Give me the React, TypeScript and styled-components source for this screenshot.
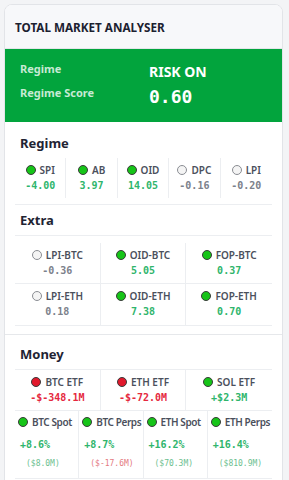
import React from 'react';
import styled, { createGlobalStyle } from 'styled-components';

const GlobalStyle = createGlobalStyle`
  body {
    margin: 0;
    padding: 4px 6px 0 4px;
    background: #f3f4f6;
    font-family: "Noto Sans", "Open Sans", sans-serif;
  }
`

const Card = styled.div`
  background: #fff;
  border: 1px solid #e2e4e8;
  border-radius: 8px;
  overflow: hidden;
`

const Header = styled.div`
  height: 43px;
  display: flex;
  align-items: center;
  padding-left: 10px;
  background: #f7f8fa;
  border-bottom: 1px solid #e4e6ea;
  color: #1c2130;
  font-size: 11.7px;
  font-weight: 700;
`

const Banner = styled.div`
  height: 73px;
  background: #02a43d;
  display: grid;
  grid-template-columns: 129px 1fr;
  grid-auto-rows: 24px;
  align-content: start;
  padding: 10px 0 0 15px;
  box-sizing: border-box;
`

const BannerLabel = styled.div`
  color: rgba(255, 255, 255, 0.78);
  font-size: 11px;
  font-weight: 700;
  line-height: 20px;
`

const BannerValue = styled.div<{ $mono?: boolean }>`
  color: #fff;
  font-weight: 700;
  font-size: ${p => (p.$mono ? '18px' : '14px')};
  font-family: ${p => (p.$mono ? '"DejaVu Sans Mono", monospace' : 'inherit')};
  line-height: ${p => (p.$mono ? '26px' : '22px')};
  margin-top: ${p => (p.$mono ? '1px' : '2px')};
`

const Section = styled.div<{ $top?: boolean }>`
  padding: ${p => (p.$top ? '10px' : '12px')} 10px 8px;
  border-top: ${p => (p.$top ? '1px solid #e6e8eb' : 'none')};
`

const Heading = styled.div<{ $gap?: number }>`
  color: #1f2433;
  font-size: 13px;
  font-weight: 700;
  line-height: 18px;
  padding-left: 5px;
  margin-top: ${p => p.$gap ?? 0}px;
  margin-bottom: 6px;
`

const Grid = styled.div<{ $cols: number; $lined?: boolean; $padTop?: number; $padBottom?: number }>`
  display: grid;
  grid-template-columns: repeat(${p => p.$cols}, 1fr);
  border-top: ${p => (p.$lined ? '1px solid #eceef1' : 'none')};
  border-bottom: 1px solid #eceef1;
  padding-top: ${p => p.$padTop ?? 0}px;
  padding-bottom: ${p => p.$padBottom ?? 0}px;
`

const Cell = styled.div<{ $h: number; $left?: boolean; $last?: boolean; $rowLine?: boolean }>`
  height: ${p => p.$h}px;
  display: flex;
  flex-direction: column;
  align-items: ${p => (p.$left ? 'flex-start' : 'center')};
  padding: ${p => (p.$left ? '4px 0 0 3px' : '5px 0 0 0')};
  box-sizing: border-box;
  border-right: ${p => (p.$last ? 'none' : '1px solid #eceef1')};
  border-bottom: ${p => (p.$rowLine ? '1px solid #eceef1' : 'none')};
  white-space: nowrap;
  min-width: 0;
`

const Label = styled.div<{ $tight?: boolean }>`
  display: flex;
  align-items: center;
  gap: 4px;
  color: #4b505c;
  font-size: 10px;
  font-weight: 600;
  line-height: 14px;
  letter-spacing: ${p => (p.$tight ? '-0.4px' : '0')};
`

const Dot = styled.span<{ $state: 'on' | 'off' | 'neg' }>`
  width: 10px;
  height: 10px;
  border-radius: 50%;
  box-sizing: border-box;
  border: 1px solid ${p => (p.$state === 'off' ? '#8a8d93' : '#3a3a3a')};
  background: ${p => (p.$state === 'on' ? '#16c418' : p.$state === 'neg' ? '#e1192c' : '#f4f4f4')};
  flex-shrink: 0;
`

const tone = {
  up: '#2fb56c',
  flat: '#7c818b',
  down: '#e5283e',
  upSoft: '#6cc08f',
  downSoft: '#e47a7f',
}

const Value = styled.div<{ $tone: keyof typeof tone; $indent?: number; $mt?: number }>`
  color: ${p => tone[p.$tone]};
  font-family: "DejaVu Sans Mono", monospace;
  font-size: 10px;
  font-weight: 700;
  line-height: 14px;
  margin-top: ${p => p.$mt ?? 2}px;
  padding-left: ${p => p.$indent ?? 0}px;
`

const Sub = styled.div<{ $tone: keyof typeof tone }>`
  color: ${p => tone[p.$tone]};
  font-family: "DejaVu Sans Mono", monospace;
  font-size: 8px;
  line-height: 12px;
  margin-top: 6px;
  padding-left: 8px;
`

type Item = { name: string; state: 'on' | 'off' | 'neg'; value: string; tone: keyof typeof tone }

const regime: Item[] = [
  { name: 'SPI', state: 'on', value: '-4.00', tone: 'up' },
  { name: 'AB', state: 'on', value: '3.97', tone: 'up' },
  { name: 'OID', state: 'on', value: '14.05', tone: 'up' },
  { name: 'DPC', state: 'off', value: '-0.16', tone: 'flat' },
  { name: 'LPI', state: 'off', value: '-0.20', tone: 'flat' },
]

const extra: Item[] = [
  { name: 'LPI-BTC', state: 'off', value: '-0.36', tone: 'flat' },
  { name: 'OID-BTC', state: 'on', value: '5.05', tone: 'up' },
  { name: 'FOP-BTC', state: 'on', value: '0.37', tone: 'up' },
  { name: 'LPI-ETH', state: 'off', value: '0.18', tone: 'flat' },
  { name: 'OID-ETH', state: 'on', value: '7.38', tone: 'up' },
  { name: 'FOP-ETH', state: 'on', value: '0.70', tone: 'up' },
]

const etfs: Item[] = [
  { name: 'BTC ETF', state: 'neg', value: '-$-348.1M', tone: 'down' },
  { name: 'ETH ETF', state: 'neg', value: '-$-72.0M', tone: 'down' },
  { name: 'SOL ETF', state: 'on', value: '+$2.3M', tone: 'up' },
]

const flows = [
  { name: 'BTC Spot', value: '+8.6%', sub: '($8.0M)', soft: 'upSoft' as const },
  { name: 'BTC Perps', value: '+8.7%', sub: '($-17.6M)', soft: 'downSoft' as const },
  { name: 'ETH Spot', value: '+16.2%', sub: '($70.3M)', soft: 'upSoft' as const },
  { name: 'ETH Perps', value: '+16.4%', sub: '($810.9M)', soft: 'upSoft' as const },
]

const Metric = ({ item, h, last, rowLine }: { item: Item; h: number; last?: boolean; rowLine?: boolean }) => (
  <Cell $h={h} $last={last} $rowLine={rowLine}>
    <Label>
      <Dot $state={item.state} />
      {item.name}
    </Label>
    <Value $tone={item.tone}>{item.value}</Value>
  </Cell>
)

const App = () => {
  return (
    <>
      <GlobalStyle />
      <Card>
        <Header>TOTAL MARKET ANALYSER</Header>
        <Banner>
          <BannerLabel>Regime</BannerLabel>
          <BannerValue>RISK ON</BannerValue>
          <BannerLabel>Regime Score</BannerLabel>
          <BannerValue $mono>0.60</BannerValue>
        </Banner>

        <Section>
          <Heading>Regime</Heading>
          <Grid $cols={5} $padBottom={6}>
            {regime.map((r, i) => (
              <Metric key={r.name} item={r} h={40} last={i === regime.length - 1} />
            ))}
          </Grid>
          <Heading $gap={6}>Extra</Heading>
          <Grid $cols={3} $lined $padTop={7}>
            {extra.map((r, i) => (
              <Metric key={r.name} item={r} h={41} last={i % 3 === 2} rowLine={i < 3} />
            ))}
          </Grid>
        </Section>

        <Section $top>
          <Heading>Money</Heading>
          <Grid $cols={3} $lined>
            {etfs.map((r, i) => (
              <Metric key={r.name} item={r} h={40} last={i === etfs.length - 1} />
            ))}
          </Grid>
          <Grid $cols={4}>
            {flows.map((f, i) => (
              <Cell key={f.name} $h={67} $left $last={i === flows.length - 1}>
                <Label $tight>
                  <Dot $state="on" />
                  {f.name}
                </Label>
                <Value $tone="up" $indent={2} $mt={9}>{f.value}</Value>
                <Sub $tone={f.soft}>{f.sub}</Sub>
              </Cell>
            ))}
          </Grid>
        </Section>
      </Card>
    </>
  )
}

export default App;
